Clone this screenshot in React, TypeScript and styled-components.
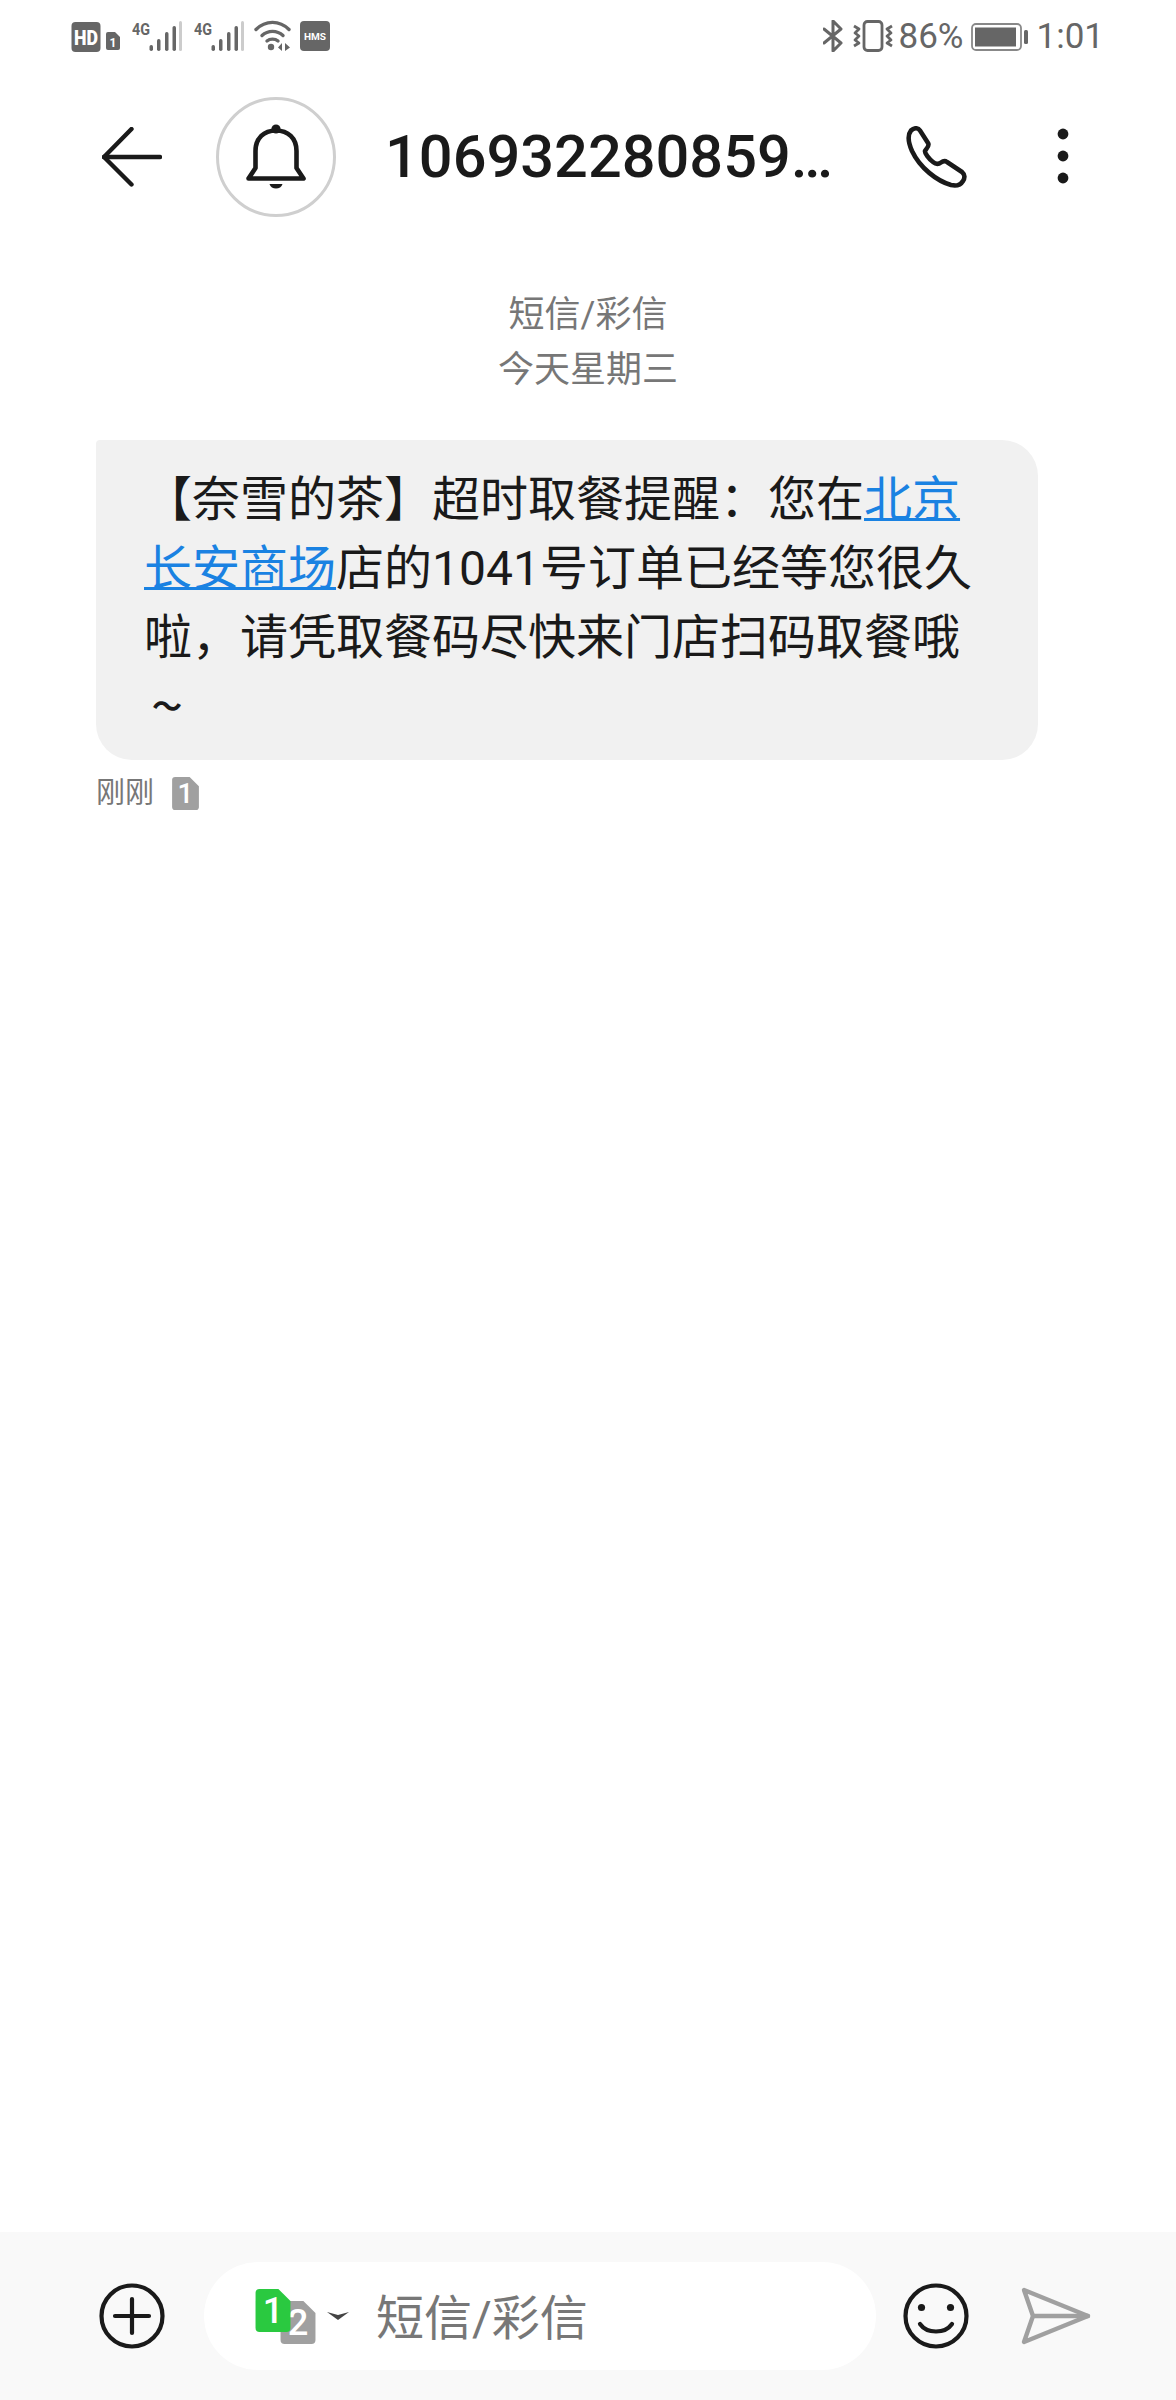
import React from "react";
import styled, { createGlobalStyle } from "styled-components";

const Global = createGlobalStyle`
  html, body { margin: 0; padding: 0; background: #fff; }
  body { font-family: Roboto, "Noto Sans CJK SC", sans-serif; }
`;

const Page = styled.div`
  width: 1176px;
  height: 2400px;
  display: flex;
  flex-direction: column;
  background: #fff;
  overflow: hidden;
`;

const StatusBar = styled.div`
  height: 70px;
  display: flex;
  justify-content: space-between;
  align-items: flex-start;
  padding: 20px 72px 0 71px;
  box-sizing: border-box;
`;

const StatusGroup = styled.div`
  display: flex;
  align-items: flex-start;
  color: #666;
`;

const StatusText = styled.span<{ $gap: number }>`
  font-size: 35px;
  line-height: 34px;
  color: #666;
  margin-left: ${(p) => p.$gap}px;
`;

const StatusIcon = styled.svg<{ $gap?: number }>`
  display: block;
  flex: none;
  margin-left: ${(p) => p.$gap ?? 0}px;
`;

const Header = styled.header`
  height: 173px;
  display: flex;
  align-items: center;
  padding-left: 102px;
  box-sizing: border-box;
`;

const HeaderIcon = styled.svg<{ $gap?: number }>`
  display: block;
  flex: none;
  margin-left: ${(p) => p.$gap ?? 0}px;
`;

const Avatar = styled.div`
  width: 120px;
  height: 120px;
  margin-left: 54px;
  flex: none;
  border: 3px solid #cfcfcf;
  border-radius: 50%;
  box-sizing: border-box;
  display: flex;
  align-items: center;
  justify-content: center;
`;

const Title = styled.h1`
  margin: 0 0 0 49px;
  width: 450px;
  font-size: 59.5px;
  line-height: 70px;
  font-weight: 500;
  color: #1a1a1a;
  white-space: nowrap;
`;

const DateBlock = styled.div`
  margin-top: 45px;
  text-align: center;
  font-size: 36px;
  line-height: 55px;
  color: #777;
`;

const Bubble = styled.div`
  margin: 42px 0 0 96px;
  width: 942px;
  height: 320px;
  box-sizing: border-box;
  padding: 25px 54px 0 48px;
  background: #f1f1f1;
  border-radius: 4px 36px 36px 36px;
  font-size: 48px;
  line-height: 69px;
  color: #1a1a1a;
`;

const Link = styled.a`
  color: #1a82e2;
  text-decoration: underline;
  text-decoration-thickness: 3px;
`;

const Tilde = styled.span`
  display: inline-block;
  margin-left: 8px;
  font-size: 30px;
  font-weight: 700;
  line-height: 69px;
  vertical-align: top;
`;

const Meta = styled.div`
  margin: 14px 0 0 96px;
  display: flex;
  align-items: center;
  font-size: 29px;
  line-height: 38px;
  color: #777;
`;

const Footer = styled.footer`
  margin-top: auto;
  height: 168px;
  background: #f9f9f9;
  display: flex;
  align-items: center;
  padding-left: 99px;
  box-sizing: border-box;
`;

const Pill = styled.div`
  width: 672px;
  height: 108px;
  margin: 0 27px 0 39px;
  flex: none;
  border-radius: 54px;
  background: #fff;
  display: flex;
  align-items: center;
  padding-left: 51px;
  box-sizing: border-box;
`;

const Placeholder = styled.span`
  margin-left: 27px;
  padding-top: 5px;
  font-size: 48px;
  line-height: 60px;
  color: #777;
`;

const Signal = () => (
  <StatusIcon width="50" height="32" viewBox="0 0 50 32" $gap={12}>
    <text x="0" y="15" fontFamily="Roboto, sans-serif" fontWeight="700" fontSize="17" fill="#666" textLength="18" lengthAdjust="spacingAndGlyphs">4G</text>
    <rect x="17.5" y="25" width="3.5" height="6" rx="1.7" fill="#666" />
    <rect x="25" y="19" width="3.5" height="12" rx="1.7" fill="#666" />
    <rect x="33" y="12" width="3.5" height="19" rx="1.7" fill="#666" />
    <rect x="40.5" y="6" width="3.5" height="25" rx="1.7" fill="#666" />
    <rect x="47" y="1" width="3" height="30" rx="1.5" fill="#ccc" />
  </StatusIcon>
);

const Sim = ({ n, fill, w, h }: { n: string; fill: string; w: number; h: number }) => (
  <svg width={w} height={h} viewBox="0 0 26 32" style={{ display: "block", flex: "none" }}>
    <path d="M3 0H17L26 9V29a3 3 0 0 1-3 3H3a3 3 0 0 1-3-3V3a3 3 0 0 1 3-3Z" fill={fill} />
    <text x="13" y="25.5" textAnchor="middle" fontFamily="Roboto, sans-serif" fontWeight="500" fontSize="27" fill="#fff">{n}</text>
  </svg>
);

const SimStack = styled.div`
  position: relative;
  width: 61px;
  height: 55px;
  flex: none;
`;

const SimLayer = styled.div<{ $left: number; $top: number }>`
  position: absolute;
  left: ${(p) => p.$left}px;
  top: ${(p) => p.$top}px;
`;

const Caret = styled.svg`
  display: block;
  flex: none;
  margin-left: 11px;
  margin-top: 0;
`;

const MetaSim = styled.div`
  margin-left: 18px;
`;

export default function App() {
  return (
    <Page>
      <Global />
      <StatusBar>
        <StatusGroup>
          <StatusIcon width="30" height="32" viewBox="0 0 30 32" style={{ marginTop: 2 }}>
            <rect x="0.5" y="0" width="29" height="30" rx="4" fill="#666" />
            <text x="15" y="22.5" textAnchor="middle" fontFamily="Roboto, sans-serif" fontWeight="900" fontSize="21" textLength="24" lengthAdjust="spacingAndGlyphs" fill="#fff">HD</text>
          </StatusIcon>
          <StatusIcon width="14" height="18" viewBox="0 0 14 18" $gap={5} style={{ marginTop: 12 }}>
            <path d="M2 0H9L14 5V16a2 2 0 0 1-2 2H2a2 2 0 0 1-2-2V2a2 2 0 0 1 2-2Z" fill="#666" />
            <text x="7" y="15" textAnchor="middle" fontFamily="Roboto, sans-serif" fontWeight="700" fontSize="12" fill="#fff">1</text>
          </StatusIcon>
          <Signal />
          <Signal />
          <StatusIcon width="37" height="32" viewBox="0 0 37 32" $gap={10}>
            <g fill="none" stroke="#666" strokeWidth="3.4" strokeLinecap="round">
              <path d="M2 9.5C11.5 0 25.5 0 35 9.5" />
              <path d="M8 15.5C14 10 23 10 29 15.5" />
              <path d="M13 21C16 18.5 21 18.5 24 21" />
            </g>
            <circle cx="17" cy="27" r="3.2" fill="#666" />
            <path d="M28 23V31L24 27.5Z M31 23V31L36 27.5Z" fill="#666" />
          </StatusIcon>
          <StatusIcon width="30" height="31" viewBox="0 0 30 31" $gap={9} style={{ marginTop: 1 }}>
            <rect width="30" height="30" rx="4" fill="#666" />
            <text x="15" y="19" textAnchor="middle" fontFamily="Roboto, sans-serif" fontWeight="700" fontSize="9.5" textLength="22" lengthAdjust="spacingAndGlyphs" fill="#fff">HMS</text>
          </StatusIcon>
        </StatusGroup>
        <StatusGroup>
          <StatusIcon width="20" height="32" viewBox="0 0 20 32">
            <path d="M1 9L18 23L10 31V1L18 9L1 23" fill="none" stroke="#666" strokeWidth="3" strokeLinejoin="round" strokeLinecap="round" />
          </StatusIcon>
          <StatusIcon width="40" height="32" viewBox="0 0 40 32" $gap={10}>
            <rect x="11" y="1.5" width="18" height="29" rx="3.5" fill="none" stroke="#666" strokeWidth="2.8" />
            <path d="M1 6L6 9L2 13L6 16L2 20L6 23L1 26" fill="none" stroke="#666" strokeWidth="2.8" strokeLinejoin="round" />
            <path d="M39 6L34 9L38 13L34 16L38 20L34 23L39 26" fill="none" stroke="#666" strokeWidth="2.8" strokeLinejoin="round" />
          </StatusIcon>
          <StatusText $gap={6}>86%</StatusText>
          <StatusIcon width="58" height="28" viewBox="0 0 58 28" $gap={7} style={{ marginTop: 3 }}>
            <rect x="1" y="1" width="49" height="26" rx="4" fill="none" stroke="#888" strokeWidth="1.8" />
            <rect x="4" y="4.5" width="41" height="19" fill="#666" />
            <rect x="53" y="7" width="4" height="14" rx="1.5" fill="#666" />
          </StatusIcon>
          <StatusText $gap={8}>1:01</StatusText>
        </StatusGroup>
      </StatusBar>

      <Header>
        <HeaderIcon width="60" height="60" viewBox="0 0 60 60" fill="none" stroke="#1a1a1a" strokeWidth="4.4" strokeLinecap="round" strokeLinejoin="round">
          <path d="M29.5 2L2 30L29.5 57.5" />
          <path d="M2 30H58" />
        </HeaderIcon>
        <Avatar>
          <svg width="60" height="66" viewBox="0 0 60 66" style={{ display: "block" }}>
            <path d="M2.5 54.5L9.5 44V27C9.5 14 18 6.5 30 6.5C42 6.5 50.5 14 50.5 27V44L57.5 54.5Z" fill="none" stroke="#1a1a1a" strokeWidth="4.6" strokeLinejoin="round" />
            <circle cx="30" cy="5" r="4.6" fill="#1a1a1a" />
            <path d="M23.5 60H36.5C35 66 25 66 23.5 60Z" fill="#1a1a1a" />
          </svg>
        </Avatar>
        <Title>106932280859…</Title>
        <HeaderIcon width="62" height="62" viewBox="0 0 62 62" $gap={71} fill="none" stroke="#1a1a1a" strokeWidth="4.6" strokeLinejoin="round" strokeLinecap="round">
          <path d="M5 4.5C8 1.5 12 1.5 14 4.5L22 17C24 20 20 23 19 25C18.5 27 23 33 27 36C30 38.5 33 38 35 36.5C37 35 39 34.5 41 36L56 46C59 48.5 59 52 57 55C54 60 50 60 45 59C31 55 14 42 6 25C2.5 17 1 9.5 5 4.5Z" />
        </HeaderIcon>
        <HeaderIcon width="12" height="58" viewBox="0 0 12 58" $gap={89} fill="#1a1a1a">
          <circle cx="6" cy="6" r="5.4" />
          <circle cx="6" cy="28" r="5.4" />
          <circle cx="6" cy="50" r="5.4" />
        </HeaderIcon>
      </Header>

      <DateBlock>
        短信/彩信
        <br />
        今天星期三
      </DateBlock>

      <Bubble>
        【奈雪的茶】超时取餐提醒：您在<Link>北京长安商场</Link>店的1041号订单已经等您很久啦，请凭取餐码尽快来门店扫码取餐哦
        <Tilde>～</Tilde>
      </Bubble>

      <Meta>
        刚刚
        <MetaSim>
          <Sim n="1" fill="#a0a0a0" w={27} h={33} />
        </MetaSim>
      </Meta>

      <Footer>
        <svg width="66" height="66" viewBox="0 0 66 66" fill="none" stroke="#1a1a1a" strokeWidth="4.2" strokeLinecap="round" style={{ display: "block", flex: "none" }}>
          <circle cx="33" cy="33" r="30.5" />
          <path d="M16 33H50M33 16V50" />
        </svg>
        <Pill>
          <SimStack>
            <SimLayer $left={25} $top={12}>
              <Sim n="2" fill="#a0a0a0" w={36} h={43} />
            </SimLayer>
            <SimLayer $left={0} $top={0}>
              <Sim n="1" fill="#2ac940" w={36} h={43} />
            </SimLayer>
          </SimStack>
          <Caret width="22" height="10" viewBox="0 0 22 10">
            <path d="M0 1L11 4L22 1L11 9Z" fill="#444" />
          </Caret>
          <Placeholder>短信/彩信</Placeholder>
        </Pill>
        <svg width="66" height="66" viewBox="0 0 66 66" fill="none" stroke="#1a1a1a" strokeWidth="4.2" strokeLinecap="round" style={{ display: "block", flex: "none" }}>
          <circle cx="33" cy="33" r="30.5" />
          <path d="M17 41C24 51 42 51 49 41" />
          <circle cx="18.5" cy="24.5" r="3.6" fill="#1a1a1a" stroke="none" />
          <circle cx="47.5" cy="24.5" r="3.6" fill="#1a1a1a" stroke="none" />
        </svg>
        <svg width="70" height="58" viewBox="0 0 70 58" fill="none" stroke="#a0a0a0" strokeWidth="4.4" strokeLinejoin="round" strokeLinecap="round" style={{ display: "block", flex: "none", marginLeft: 52 }}>
          <path d="M3 3L67 29L3 55L12 29Z" />
          <path d="M12 29H67" />
        </svg>
      </Footer>
    </Page>
  );
}
